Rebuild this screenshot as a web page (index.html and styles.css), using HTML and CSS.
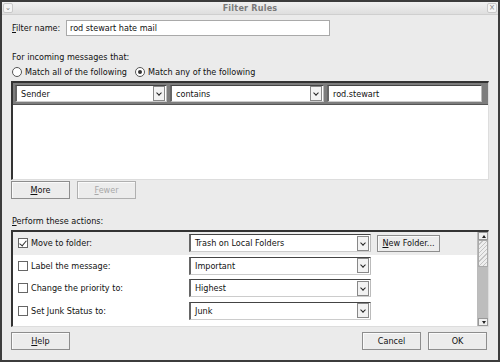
FILE: index.html
```html
<!DOCTYPE html>
<html lang="en">

<head>
  <meta charset="UTF-8">
  <title>Filter Rules</title>
  <link rel="stylesheet" href="styles.css">
</head>

<body>
  <div class="window">
    <div class="titlebar">
      <span class="tb-btn">&#8964;</span>
      <span class="title">Filter Rules</span>
      <span class="tb-btn">&#215;</span>
    </div>

    <div class="content">
      <div class="name-row">
        <label for="filterName"><u>F</u>ilter name:</label>
        <input type="text" id="filterName" value="rod stewart hate mail">
      </div>

      <div class="incoming">For incoming messages that:</div>
      <div class="radios">
        <span class="radio"></span><span class="radio-label">Match all of the following</span>
        <span class="radio on"></span><span class="radio-label">Match any of the following</span>
      </div>

      <div class="conditions">
        <div class="cond-row">
          <div class="field sel w-sender"><span>Sender</span><i class="drop"></i></div>
          <div class="field sel w-op"><span>contains</span><i class="drop"></i></div>
          <div class="field w-value"><span>rod.stewart</span></div>
        </div>
      </div>

      <div class="btn-row">
        <button class="btn"><u>M</u>ore</button>
        <button class="btn disabled"><u>F</u>ewer</button>
      </div>

      <div class="perform"><u>P</u>erform these actions:</div>

      <div class="actions">
        <div class="action-list">
          <div class="action first">
            <span class="check on"></span>
            <span class="act-label">Move to folder:</span>
            <div class="field sel w-target"><span>Trash on Local Folders</span><i class="drop"></i></div>
            <button class="btn small"><u>N</u>ew Folder...</button>
          </div>
          <div class="action">
            <span class="check"></span>
            <span class="act-label">Label the message:</span>
            <div class="field sel w-target"><span>Important</span><i class="drop"></i></div>
          </div>
          <div class="action">
            <span class="check"></span>
            <span class="act-label">Change the priority to:</span>
            <div class="field sel w-target"><span>Highest</span><i class="drop"></i></div>
          </div>
          <div class="action">
            <span class="check"></span>
            <span class="act-label">Set Junk Status to:</span>
            <div class="field sel w-target"><span>Junk</span><i class="drop"></i></div>
          </div>
        </div>
        <div class="scrollbar">
          <span class="arrow up"></span>
          <span class="thumb"></span>
          <span class="track"></span>
          <span class="arrow down"></span>
        </div>
      </div>

      <div class="footer">
        <button class="btn"><u>H</u>elp</button>
        <div class="footer-right">
          <button class="btn">Cancel</button>
          <button class="btn">OK</button>
        </div>
      </div>
    </div>
  </div>
</body>

</html>
```

FILE: styles.css
```css
* {
  box-sizing: border-box;
}

body {
  margin: 0;
  padding: 0;
  font-family: 'DejaVu Sans Condensed', 'DejaVu Sans', sans-serif;
  font-size: 9px;
  color: #111;
  background: #e9e9e9;
}

u {
  text-decoration: underline;
  text-underline-offset: 1px;
}

.window {
  width: 500px;
  height: 362px;
  border: 2px solid #3c3c3c;
  background: #ebebeb;
  display: flex;
  flex-direction: column;
}

.titlebar {
  height: 13px;
  display: flex;
  align-items: center;
  justify-content: space-between;
  padding: 0 1px;
  background: linear-gradient(#f0f0f0, #dedede);
  border-bottom: 1px solid #cfcfcf;
}

.title {
  font-weight: bold;
  color: #7a7a7a;
  font-size: 9px;
  letter-spacing: 0.2px;
}

.tb-btn {
  width: 10px;
  height: 10px;
  border: 1px solid #c8c8c8;
  border-radius: 2px;
  background: #f4f4f4;
  color: #888;
  font-size: 8px;
  line-height: 7px;
  text-align: center;
}

.content {
  flex: 1;
  padding: 0 10px 0 8px;
  display: flex;
  flex-direction: column;
}

.name-row {
  display: flex;
  align-items: center;
  margin-top: 5px;
  height: 16px;
}

.name-row label {
  width: 56px;
  padding-left: 2px;
}

.name-row input {
  width: 264px;
  height: 16px;
  border: 1px solid #a9a9a9;
  background: #fff;
  font: inherit;
  padding: 0 3px;
  color: #111;
}

.incoming {
  margin-top: 15px;
  height: 12px;
  line-height: 12px;
  padding-left: 2px;
}

.radios {
  display: flex;
  align-items: center;
  height: 14px;
  margin-top: 2px;
  padding-left: 2px;
}

.radio {
  width: 10px;
  height: 10px;
  border: 1px solid #555;
  border-radius: 50%;
  background: #fff;
  margin-right: 3px;
  position: relative;
}

.radio.on::after {
  content: '';
  position: absolute;
  left: 2px;
  top: 2px;
  width: 4px;
  height: 4px;
  border-radius: 50%;
  background: #333;
}

.radio-label {
  margin-right: 8px;
}

.conditions {
  margin-top: 2px;
  margin-left: 1px;
  width: 478px;
  height: 99px;
  background: #fff;
  border-top: 2px solid #333;
  border-left: 2px solid #333;
  border-right: 1px solid #ddd;
  border-bottom: 1px solid #ddd;
}

.cond-row {
  display: flex;
  gap: 3px;
  height: 22px;
  padding: 2px 3px 3px 2px;
  background: #7d7d7d;
  border-bottom: 1px solid #555;
}

.field {
  height: 17px;
  background: #fff;
  border-top: 1px solid #444;
  border-left: 2px solid #666;
  border-right: 1px solid #bbb;
  border-bottom: 1px solid #ccc;
  display: flex;
  align-items: center;
  padding-left: 4px;
  white-space: nowrap;
  overflow: hidden;
}

.field span {
  flex: 1;
}

.w-sender {
  width: 152px;
}

.w-op {
  width: 154px;
}

.w-value {
  width: 155px;
}

.drop {
  width: 12px;
  height: 15px;
  border: 1px solid #888;
  background: #f2f2f2;
  margin-right: 1px;
  position: relative;
}

.drop::after {
  content: '';
  position: absolute;
  left: 3px;
  top: 4px;
  width: 3px;
  height: 3px;
  border-right: 1.5px solid #222;
  border-bottom: 1.5px solid #222;
  transform: rotate(45deg);
}

.btn-row {
  display: flex;
  gap: 7px;
  margin-top: 1px;
  padding-left: 1px;
}

.btn {
  width: 59px;
  height: 18px;
  border: 1px solid #8d8d8d;
  background: #ececec;
  font: inherit;
  color: #111;
  padding: 0;
  box-shadow: inset 1px 1px 0 #fafafa;
}

.btn.disabled {
  color: #a8a8a8;
  border-color: #b0b0b0;
}

.perform {
  margin-top: 16px;
  height: 12px;
  line-height: 12px;
  padding-left: 2px;
}

.actions {
  margin-top: 3px;
  margin-left: 1px;
  width: 478px;
  height: 97px;
  display: flex;
  background: #fff;
  border-top: 2px solid #333;
  border-left: 2px solid #333;
  border-right: 1px solid #ddd;
  border-bottom: 1px solid #ddd;
}

.action-list {
  flex: 1;
}

.action {
  display: flex;
  align-items: center;
  height: 22.5px;
  padding-left: 5px;
}

.action.first {
  background: #ececec;
}

.check {
  width: 10px;
  height: 10px;
  border: 1px solid #666;
  background: #fff;
  margin-right: 3px;
  position: relative;
}

.check.on::after {
  content: '';
  position: absolute;
  left: 2px;
  top: 0px;
  width: 3px;
  height: 6px;
  border-right: 1px solid #333;
  border-bottom: 1px solid #333;
  transform: rotate(40deg);
}

.act-label {
  width: 158px;
}

.w-target {
  width: 182px;
  height: 18px;
}

.btn.small {
  width: 63px;
  height: 17px;
  margin-left: 6px;
}

.scrollbar {
  width: 11px;
  display: flex;
  flex-direction: column;
  border-left: 1px solid #bbb;
  background: #bdbdbd;
}

.arrow {
  height: 8px;
  background: #f0f0f0;
  border: 1px solid #999;
  position: relative;
}

.arrow::after {
  content: '';
  position: absolute;
  left: 3px;
  width: 0;
  height: 0;
  border-left: 2px solid transparent;
  border-right: 2px solid transparent;
}

.arrow.up::after {
  top: 2px;
  border-bottom: 3px solid #222;
}

.arrow.down::after {
  top: 2px;
  border-top: 3px solid #222;
}

.thumb {
  height: 27px;
  background: repeating-linear-gradient(135deg, #eee 0 2px, #c4c4c4 2px 3px);
  border: 1px solid #aaa;
}

.track {
  flex: 1;
}

.footer {
  display: flex;
  justify-content: space-between;
  margin-top: 5px;
  padding-left: 1px;
}

.footer-right {
  display: flex;
  gap: 7px;
  margin-right: 1px;
}
```
